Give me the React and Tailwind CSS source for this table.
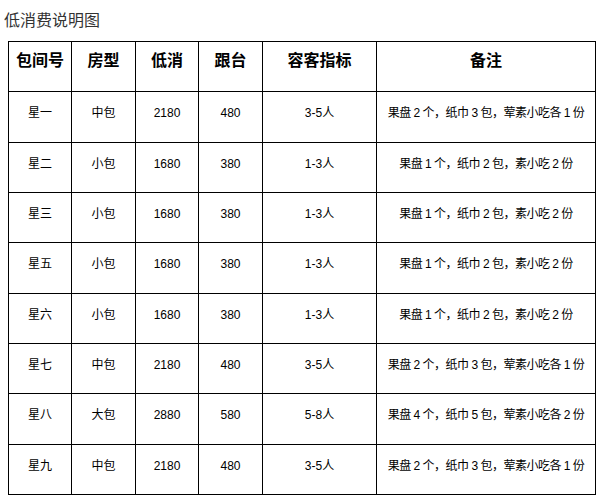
import React from 'react';

const rows = [
  { name: '星一', type: '中包', min: '2180', stage: '480', cap: '3-5人', note: '果盘 2 个，纸巾 3 包，荤素小吃各 1 份', h: 'h-[51px]' },
  { name: '星二', type: '小包', min: '1680', stage: '380', cap: '1-3人', note: '果盘 1 个，纸巾 2 包，素小吃 2 份', h: 'h-[50px]' },
  { name: '星三', type: '小包', min: '1680', stage: '380', cap: '1-3人', note: '果盘 1 个，纸巾 2 包，素小吃 2 份', h: 'h-[50px]' },
  { name: '星五', type: '小包', min: '1680', stage: '380', cap: '1-3人', note: '果盘 1 个，纸巾 2 包，素小吃 2 份', h: 'h-[51px]' },
  { name: '星六', type: '小包', min: '1680', stage: '380', cap: '1-3人', note: '果盘 1 个，纸巾 2 包，素小吃 2 份', h: 'h-[50px]' },
  { name: '星七', type: '中包', min: '2180', stage: '480', cap: '3-5人', note: '果盘 2 个，纸巾 3 包，荤素小吃各 1 份', h: 'h-[50px]' },
  { name: '星八', type: '大包', min: '2880', stage: '580', cap: '5-8人', note: '果盘 4 个，纸巾 5 包，荤素小吃各 2 份', h: 'h-[51px]' },
  { name: '星九', type: '中包', min: '2180', stage: '480', cap: '3-5人', note: '果盘 2 个，纸巾 3 包，荤素小吃各 1 份', h: 'h-[50px]' },
];

const headers = [
  { label: '包间号', w: 'w-[63px]' },
  { label: '房型', w: 'w-[64px]' },
  { label: '低消', w: 'w-[63px]' },
  { label: '跟台', w: 'w-[64px]' },
  { label: '容客指标', w: 'w-[114px]' },
  { label: '备注', w: 'w-[219px]' },
];

export default function App() {
  return (
    <div className="w-[600px] h-[495px] bg-white overflow-hidden font-['Liberation_Sans','Noto_Sans_CJK_SC',sans-serif]">
      {/* Title */}
      <div className="h-[41px] pl-[4px] pt-[11px] text-[16px] leading-[20px] text-[#333]">低消费说明图</div>

      {/* Table */}
      <table className="ml-[8px] border-collapse table-fixed text-black">
        <thead>
          <tr className="h-[50px]">
            {headers.map((h) => (
              <th
                key={h.label}
                className={`${h.w} border border-black text-center align-middle pb-[12px] text-[16px] font-bold leading-none`}
              >
                {h.label}
              </th>
            ))}
          </tr>
        </thead>
        <tbody className="text-[12px] leading-none">
          {rows.map((r) => (
            <tr key={r.name} className={r.h}>
              <td className="border border-black text-center align-middle pb-[8px]">{r.name}</td>
              <td className="border border-black text-center align-middle pb-[8px]">{r.type}</td>
              <td className="border border-black text-center align-middle pb-[8px]">{r.min}</td>
              <td className="border border-black text-center align-middle pb-[8px]">{r.stage}</td>
              <td className="border border-black text-center align-middle pb-[8px]">{r.cap}</td>
              <td className="border border-black text-center align-middle pb-[8px] whitespace-pre tracking-[-0.5px]">
                {r.note}
              </td>
            </tr>
          ))}
        </tbody>
      </table>
    </div>
  );
}
